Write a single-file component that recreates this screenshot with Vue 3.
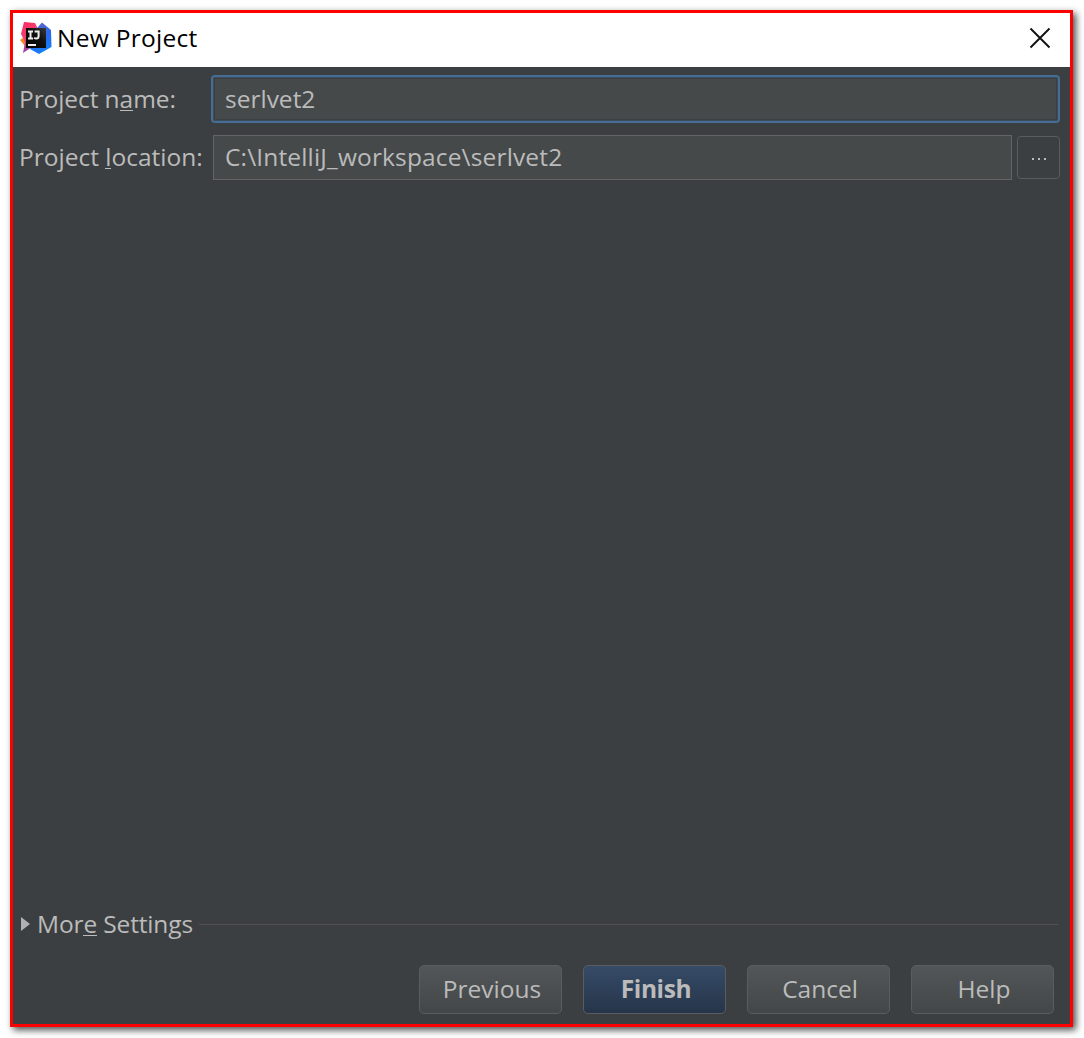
<script setup>
import { ref } from 'vue'

const projectName = ref('serlvet2')
const projectLocation = ref('C:\\IntelliJ_workspace\\serlvet2')
</script>

<template>
  <div class="page">
    <main class="dialog">
      <header class="titlebar">
        <svg class="logo" width="32" height="32" viewBox="0 0 32 32">
          <defs>
            <linearGradient id="pink" x1="0" y1="0" x2="0.3" y2="1">
              <stop offset="0" stop-color="#ff2b62" />
              <stop offset="0.5" stop-color="#f0406f" />
              <stop offset="1" stop-color="#8a4aa8" />
            </linearGradient>
            <linearGradient id="blue" x1="0.3" y1="0" x2="0.6" y2="1">
              <stop offset="0" stop-color="#5866c9" />
              <stop offset="0.5" stop-color="#2868f0" />
              <stop offset="1" stop-color="#1282f5" />
            </linearGradient>
            <linearGradient id="plate" x1="0" y1="1" x2="1" y2="0">
              <stop offset="0" stop-color="#000" />
              <stop offset="0.6" stop-color="#111" />
              <stop offset="1" stop-color="#3a3a3a" />
            </linearGradient>
          </defs>
          <path d="M0 18 6 14 9 22 5 24z" fill="#fb8420" />
          <path d="M4 0 15 1 18 7 12 25 3 31 5 20 1 12z" fill="url(#pink)" />
          <path d="M22 0.5 31 8 31.5 25 19 32 10 27 17 6z" fill="url(#blue)" />
          <rect x="6" y="6" width="20" height="20" fill="url(#plate)" />
          <path d="M8 9.4h5M10.5 9.4v7M8 16.6h5M14.6 9.4h4V14q0 2.6-2.2 2.6-1.4 0-2.2-1" fill="none" stroke="#eee" stroke-width="2" />
          <rect x="8" y="22" width="8" height="2" fill="#eee" />
        </svg>
        <h1 class="title">New Project</h1>
        <button class="close" aria-label="Close">
          <svg width="22" height="22" viewBox="0 0 22 22"><path d="M1.5 1.5 20.5 20.5M20.5 1.5 1.5 20.5" stroke="#111" stroke-width="1.9" /></svg>
        </button>
      </header>

      <section class="content">
        <div class="row name-row">
          <label class="label">Project n<u>a</u>me:</label>
          <div class="field focused">{{ projectName }}</div>
        </div>
        <div class="row location-row">
          <label class="label">Project <u>l</u>ocation:</label>
          <div class="field path">{{ projectLocation }}</div>
          <button class="browse" aria-label="Browse"><i></i><i></i><i></i></button>
        </div>

        <div class="more">
          <svg width="9" height="14" viewBox="0 0 9 14"><path d="M0 0 9 7 0 14z" fill="#afb1b3" /></svg>
          <span class="more-label">Mor<u>e</u> Settings</span>
          <span class="rule"></span>
        </div>

        <footer class="actions">
          <button class="action">Previous</button>
          <button class="action primary">Finish</button>
          <button class="action">Cancel</button>
          <button class="action">Help</button>
        </footer>
      </section>
    </main>
  </div>
</template>

<style>
body {
  background: #fff;
}
</style>

<style scoped>
* {
  box-sizing: border-box;
}
.page {
  height: 1038px;
  padding: 10px;
  overflow: hidden;
  background: #fff;
}
.dialog {
  display: flex;
  flex-direction: column;
  width: 1063px;
  height: 1017px;
  border: 3px solid #f00;
  box-shadow: 3px 3px 7px rgba(0, 0, 0, 0.7);
  font: 24.5px/34px "Open Sans", "Noto Sans", sans-serif;
  color: #bbb;
  white-space: nowrap;
}
button {
  padding: 0;
  font: inherit;
  color: inherit;
}
.titlebar {
  display: flex;
  align-items: center;
  height: 54px;
  padding: 0 19px 4px 7px;
  background: #fff;
  color: #000;
}
.title {
  flex: 1;
  margin: 0 0 0 5px;
  font: inherit;
  letter-spacing: 0.28px;
}
.close {
  display: flex;
  border: 0;
  background: none;
}
.content {
  flex: 1;
  display: flex;
  flex-direction: column;
  padding: 8px 10px 10px 6px;
  background: #3c3f41;
}
.row {
  display: flex;
  align-items: center;
}
.name-row {
  height: 48px;
}
.location-row {
  height: 45px;
  margin-top: 12px;
}
.label {
  width: 194px;
}
.name-row .label {
  width: 192px;
  letter-spacing: -0.08px;
}
.location-row .label {
  padding-bottom: 2px;
}
.field {
  display: flex;
  align-items: center;
  flex: 1;
  height: 45px;
  padding: 0 0 2px 11px;
  border: 1px solid #646464;
  background: #45494a;
}
.path {
  letter-spacing: 0.15px;
}
.focused {
  height: 48px;
  padding: 0 0 0 12px;
  border: 2px solid #466d94;
  border-radius: 4px;
  outline: 1px solid #3d4c5c;
  outline-offset: -3px;
  box-shadow: inset 0 0 0 2px #3c3f41;
}
.browse {
  display: flex;
  justify-content: center;
  align-items: center;
  gap: 4px;
  width: 43px;
  height: 43px;
  margin-left: 5px;
  padding-top: 2px;
  border: 1px solid #5a5d5e;
  border-radius: 4px;
  background: #3c3f41;
}
.browse i {
  width: 2px;
  height: 2px;
  background: #bbb;
}
.more {
  display: flex;
  align-items: center;
  height: 34px;
  margin: auto 2px 0 2px;
}
.more-label {
  margin-left: 7px;
  width: 162px;
  letter-spacing: -0.14px;
}
.rule {
  flex: 1;
  height: 1px;
  background: #515151;
}
.actions {
  display: flex;
  justify-content: flex-end;
  gap: 21px;
  margin: 24px 6px 0 0;
}
.action {
  width: 143px;
  height: 49px;
  padding: 0 0 2px 3px;
  border: 1px solid #5a5d5f;
  border-radius: 5px;
  background: linear-gradient(#525658, #434748);
}
.primary {
  background: linear-gradient(#364b68, #263549);
  font-weight: 700;
  letter-spacing: -0.4px;
}
u {
  display: inline-block;
  line-height: 25px;
  text-decoration: none;
  box-shadow: inset 0 -1px #bbb;
}
</style>
